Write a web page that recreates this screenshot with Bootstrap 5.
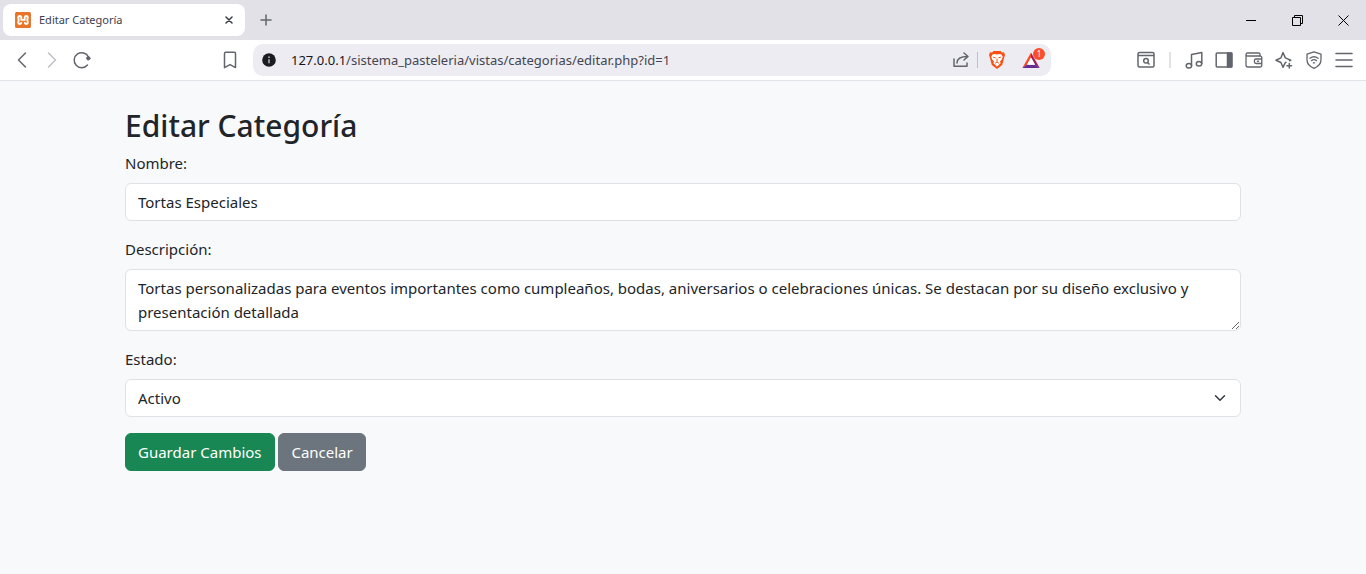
<!DOCTYPE html>
<html lang="es">
<head>
<meta charset="utf-8">
<meta name="viewport" content="width=device-width, initial-scale=1">
<title>Editar Categoría</title>
<link href="https://cdn.jsdelivr.net/npm/bootstrap@5.3.0/dist/css/bootstrap.min.css" rel="stylesheet">
<style>
  body, .form-control, .form-select, .btn { font-family: "Segoe UI", "Noto Sans", sans-serif; font-size: 15px; line-height: 24px; }
  h2 { font-size: 30px; line-height: 38px; font-weight: 500; padding-top: 2px; margin-bottom: 6px; }
  svg { display: block; fill: none; stroke: #62656c; stroke-width: 1.5; stroke-linecap: round; stroke-linejoin: round; }
  .tab-strip { background: #e2e1e8; height: 40px; }
  .page-tab { width: 242px; height: 32px; margin-left: 3px; padding: 0 8px 0 12px; border-radius: 8px; font-size: 11px; color: #3b3e4f; }
  .tool { width: 30px; height: 30px; flex: none; display: flex; align-items: center; justify-content: center; padding: 0; border: 0; background: none; }
  .tool-sm { width: 16px; height: 16px; }
  .tool-md { width: 20px; height: 20px; position: relative; }
  .window-tool { width: 46px; height: 40px; }
  .window-tool svg { stroke: #000; stroke-width: 1; stroke-linecap: butt; stroke-linejoin: miter; }
  .toolbar { height: 41px; border-bottom: 1px solid #e2e3e9; padding: 0 7px; }
  .gap-start { flex: 118 1 0; }
  .gap-end { flex: 80 1 0; }
  .address { flex: 780 1 0; min-width: 0; height: 32px; margin-left: 8px; padding: 0 10px 0 8px; border-radius: 10px; background: #edecf2; font-size: 13px; }
  .address label { color: #16161c; margin-left: 14px; }
  .address input { flex: 1; min-width: 0; border: 0; padding: 0; background: none; color: #45464f; outline: 0; }
  .rule { width: 1px; height: 16px; margin: 0 9px 0 6px; background: #c0c0c8; flex: none; }
  .rule-wide { width: 2px; margin: 0 8px; background: #e1e1e8; }
  .rewards { margin-left: 14px; }
  .alert-count { position: absolute; left: 12px; top: -2px; width: 12px; height: 12px; border-radius: 6px; background: #fb4f2b; color: #fff; font-size: 8px; line-height: 12px; text-align: center; }
</style>
</head>
<body class="bg-light">
<header>
  <div class="tab-strip d-flex align-items-center">
    <div class="page-tab bg-white d-flex align-items-center">
      <svg width="16" height="16" viewBox="0 0 16 16" aria-hidden="true"><rect x=".3" y=".3" width="15.400" height="15.400" rx="1.500" fill="#ee7422" stroke="#c65b16" stroke-width=".6"/><path d="M6.300 7.900h3.400M6.300 7.900V5.200A1.600 1.600 0 0 0 3.200 5.200c0 1 .5 1.700.5 2.700s-.5 1.800-.5 2.900a1.600 1.600 0 0 0 3.100 0M9.700 7.900V5.200a1.600 1.600 0 0 1 3.100 0c0 1-.5 1.700-.5 2.700s.5 1.800.5 2.900a1.600 1.600 0 0 1-3.100 0" stroke="#fff" stroke-width="1.900"/></svg>
      <span class="ms-2 me-auto">Editar Categoría</span>
      <button class="tool tool-sm" aria-label="Cerrar pestaña"><svg width="8" height="8" viewBox="0 0 8 8" style="stroke:#3b3e46"><path d="M1 1l6 6M7 1L1 7"/></svg></button>
    </div>
    <button class="tool ms-1 ps-1" aria-label="Nueva pestaña"><svg width="12" height="12" viewBox="0 0 12 12"><path d="M6 1v10M1 6h10"/></svg></button>
    <div class="d-flex ms-auto">
      <button class="tool window-tool" aria-label="Minimizar"><svg width="11" height="11" viewBox="0 0 11 11"><path d="M0 5.500h10"/></svg></button>
      <button class="tool window-tool" aria-label="Restaurar"><svg width="11" height="11" viewBox="0 0 11 11"><path d="M.5 2.500h8v8h-8zM2.500 2.500v-2h8v8h-2"/></svg></button>
      <button class="tool window-tool" aria-label="Cerrar"><svg width="11" height="11" viewBox="0 0 11 11"><path d="M.5.5l10 10M10.500.5l-10 10"/></svg></button>
    </div>
  </div>
  <div class="toolbar bg-white d-flex align-items-center">
    <button class="tool" aria-label="Atrás"><svg width="18" height="18" viewBox="0 0 18 18"><path d="M12.500 2L5.500 9l7 7"/></svg></button>
    <button class="tool" aria-label="Adelante"><svg width="18" height="18" viewBox="0 0 18 18" style="stroke:#c0c1c6"><path d="M5.500 2l7 7-7 7"/></svg></button>
    <button class="tool" aria-label="Recargar"><svg width="18" height="18" viewBox="0 0 18 18"><path d="M15.500 6A7.500 7.500 0 1 0 14.500 14"/><circle cx="15.300" cy="7.300" r="1.700" fill="#62656c" stroke-width="1"/></svg></button>
    <div class="gap-start"></div>
    <button class="tool" aria-label="Marcador"><svg width="18" height="18" viewBox="0 0 18 18"><path d="M3.500 2.500a1.200 1.200 0 0 1 1.200-1.200h8.600a1.200 1.200 0 0 1 1.200 1.200V16.600L9 13.600 3.500 16.600z"/></svg></button>
    <div class="address d-flex align-items-center">
      <button class="tool tool-sm" aria-label="Información del sitio"><svg width="14" height="14" viewBox="0 0 14 14"><circle cx="7" cy="7" r="6.800" fill="#1b1b22" stroke="none"/><path d="M7 6.200v4" stroke="#b9b9c2" stroke-linecap="butt"/><circle cx="7" cy="4.200" r=".9" fill="#b9b9c2" stroke="none"/></svg></button>
      <label for="url">127.0.0.1</label><input id="url" type="text" value="/sistema_pasteleria/vistas/categorias/editar.php?id=1">
      <button class="tool tool-md" aria-label="Compartir"><svg width="18" height="18" viewBox="0 0 18 18"><path d="M2 8v7.200h13V12M5 12c0-4.500 3-6.500 10.500-6.500M12 2l4 3.500-4 3.500"/></svg></button>
      <span class="rule"></span>
      <button class="tool tool-md" aria-label="Escudos"><svg width="18" height="20" viewBox="0 0 18 20"><path d="M5.500 1h7l1.500 1.500 2-.2L17 5l-.8 2.500-2 7.500L9 19l-5.200-4-2-7.500L1 5l1-2.700 2 .2z" fill="#fb4f14" stroke="none"/><path d="M6.500 4L9 4.600 11.500 4l2 .5L14.800 7l-1.300 3-1.500 1.200.6 2L9 16.500l-3.600-3.300.6-2L4.500 10 3.200 7l1.300-2.500z" fill="#fff" stroke="none"/><path d="M5.500 7.200l1.800.6M12.500 7.200l-1.800.6M9 9v2.500M7.500 13l1.500-1 1.500 1" stroke="#fb4f14" stroke-width="1"/></svg></button>
      <button class="tool tool-md rewards" aria-label="Recompensas"><svg width="18" height="18" viewBox="0 0 18 18"><path d="M9 1.500L.3 17l4.600-3L9 6.500z" fill="#ff4724" stroke="none"/><path d="M9 1.500L17.700 17l-4.600-3L9 6.500z" fill="#9e1f63" stroke="none"/><path d="M.3 17h17.400l-4.600-3.300H4.900z" fill="#662d91" stroke="none"/><path d="M9 6.500L4.900 13.700h8.200z" fill="#fff" stroke="none"/></svg><span class="alert-count">1</span></button>
    </div>
    <div class="gap-end"></div>
    <button class="tool" aria-label="Buscar pestañas"><svg width="18" height="18" viewBox="0 0 18 18"><rect x="1" y="1.500" width="16" height="14.500" rx="1.500"/><path d="M1 4.500h16M10.700 11.700l1.800 1.800" stroke-linecap="butt"/><circle cx="9" cy="9.800" r="2.300"/></svg></button>
    <span class="rule rule-wide"></span>
    <button class="tool" aria-label="Música"><svg width="18" height="18" viewBox="0 0 18 18"><path d="M6.500 14.500V3.500L16.800 1.500v11"/><ellipse cx="3.900" cy="14.800" rx="2.700" ry="2.300"/><ellipse cx="14" cy="12.700" rx="2.700" ry="2.300"/></svg></button>
    <button class="tool" aria-label="Panel lateral"><svg width="18" height="18" viewBox="0 0 18 18"><rect x="1.200" y="2" width="15.600" height="14" rx="1"/><path d="M12.500 2h4.300v14h-4.300z" fill="#62656c"/></svg></button>
    <button class="tool" aria-label="Cartera"><svg width="18" height="18" viewBox="0 0 18 18"><path d="M15 5V3.200A1.200 1.200 0 0 0 13.800 2H2.500A1.500 1.500 0 0 0 1 3.500v10.500a2 2 0 0 0 2 2h12a1.800 1.800 0 0 0 1.800-1.800V6.800A1.800 1.800 0 0 0 15 5H2.500A1.500 1.500 0 0 1 1 3.500M16.800 8h-5.600a1.800 1.800 0 0 0-1.800 1.800v.9a1.800 1.800 0 0 0 1.800 1.800h5.600" stroke-width="1.300"/><path d="M12.500 10.200h1"/></svg></button>
    <button class="tool" aria-label="Asistente"><svg width="18" height="18" viewBox="0 0 18 18"><path d="M11 11.300L10.300 11.600 8 16.300 5.900 11.500 1 9.200 5.900 6.900 8 1.500l2.300 5.400L15.800 9.200l-1.300.6M14.300 12.500v4.500M12 14.700h4.600"/></svg></button>
    <button class="tool" aria-label="VPN"><svg width="18" height="18" viewBox="0 0 18 18"><path d="M9 .8l7 2.400v5.600c0 4-3 7-7 8.500-4-1.500-7-4.500-7-8.500V3.200z" stroke-width="1.300"/><path d="M5 7.300a6.500 6.500 0 0 1 8 0M6.500 9.600a4.300 4.300 0 0 1 5 0M8.300 11.800h1.400" stroke-width="1.300"/></svg></button>
    <button class="tool" aria-label="Menú"><svg width="18" height="18" viewBox="0 0 18 18"><path d="M1 2.500h16M1 9h16M1 15.500h16"/></svg></button>
  </div>
</header>
<main class="container mt-4">
  <h2>Editar Categoría</h2>
  <form>
    <div class="mb-3">
      <label for="nombre" class="form-label">Nombre:</label>
      <input type="text" id="nombre" class="form-control" value="Tortas Especiales">
    </div>
    <div class="mb-3">
      <label for="descripcion" class="form-label">Descripción:</label>
      <textarea id="descripcion" class="form-control d-block" rows="2">Tortas personalizadas para eventos importantes como cumpleaños, bodas, aniversarios o celebraciones únicas. Se destacan por su diseño exclusivo y presentación detallada</textarea>
    </div>
    <div class="mb-3">
      <label for="estado" class="form-label">Estado:</label>
      <select id="estado" class="form-select"><option selected>Activo</option></select>
    </div>
    <button type="submit" class="btn btn-success">Guardar Cambios</button>
    <a href="#" class="btn btn-secondary">Cancelar</a>
  </form>
</main>
<script src="https://cdn.jsdelivr.net/npm/bootstrap@5.3.0/dist/js/bootstrap.bundle.min.js"></script>
</body>
</html>
